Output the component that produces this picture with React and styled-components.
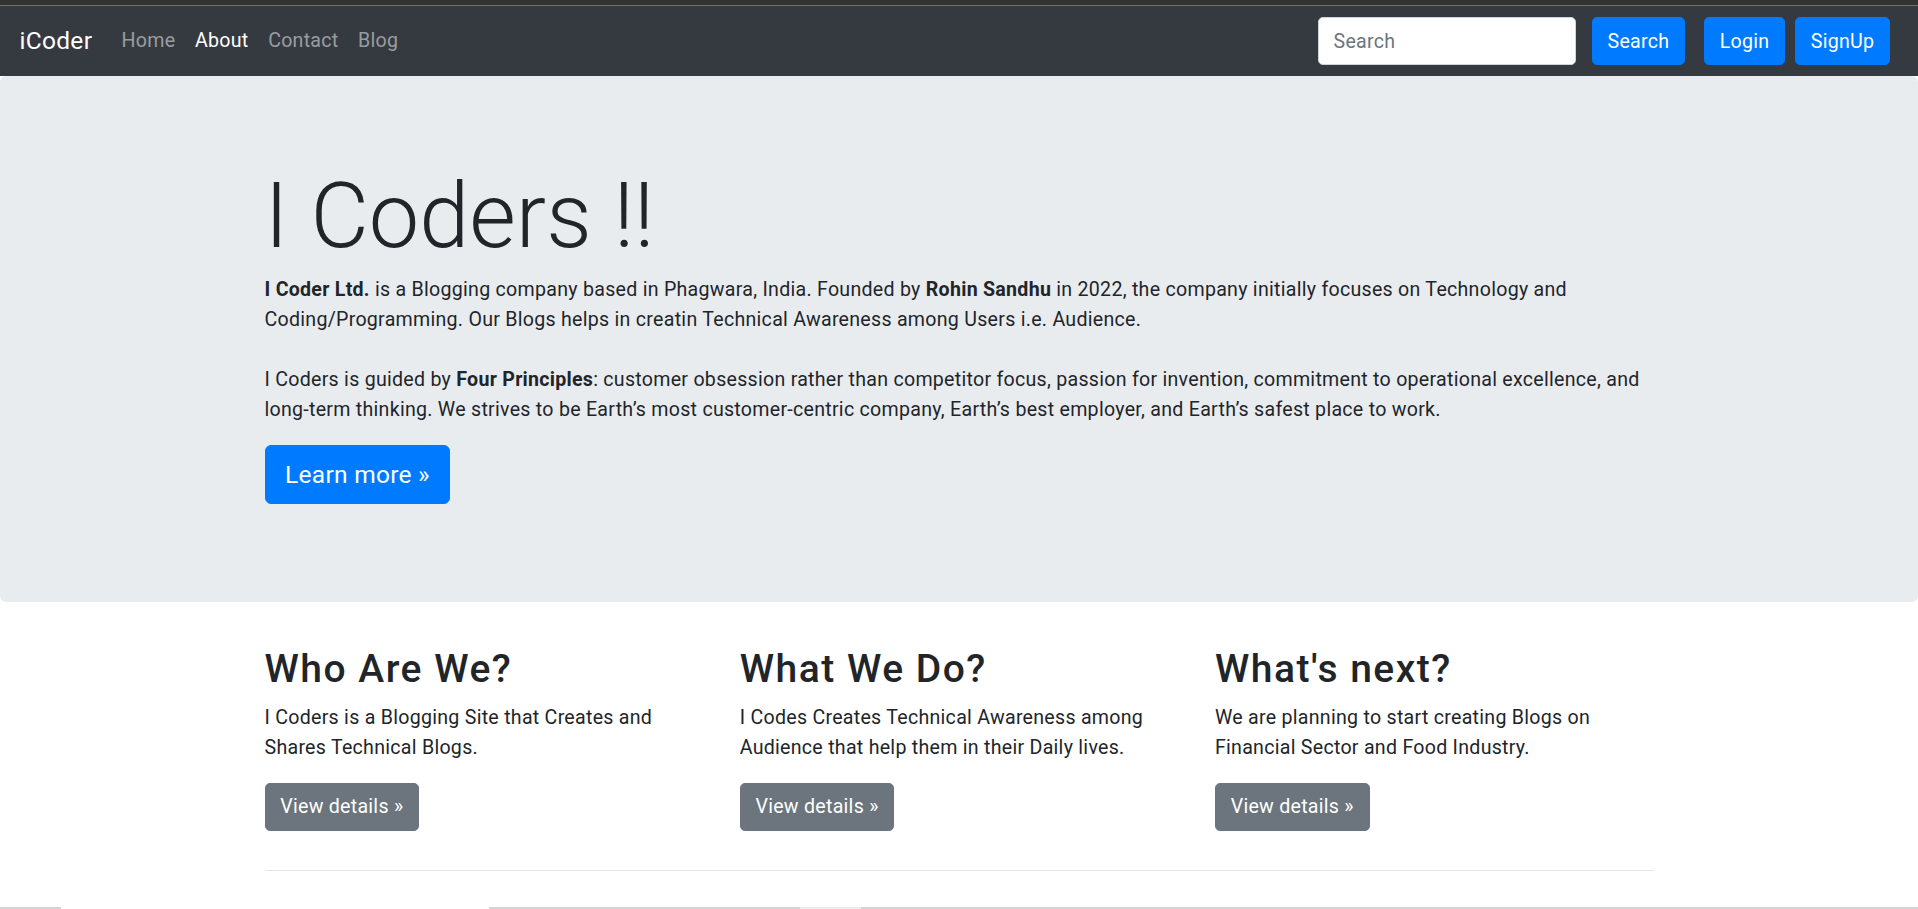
import React from 'react';
import styled, { createGlobalStyle } from 'styled-components';

const GlobalStyle = createGlobalStyle`
  html, body {
    margin: 0;
    padding: 0;
  }
  body {
    font-family: Roboto, "Segoe UI", "Liberation Sans", sans-serif;
    letter-spacing: 0.27px;
    color: #212529;
    background: #fff;
  }
  * {
    box-sizing: border-box;
  }
`;

const Page = styled.div`
  height: 100vh;
  display: flex;
  flex-direction: column;
  overflow: hidden;
`;

const TopStrip = styled.div`
  height: 6px;
  flex-shrink: 0;
  background: #333333;
  border-bottom: 1px solid #707070;
`;

const Navbar = styled.nav`
  display: flex;
  align-items: center;
  height: 70px;
  flex-shrink: 0;
  padding: 0 28px 0 19.6px;
  background: #343a40;
`;

const Brand = styled.a`
  font-size: 24.5px;
  line-height: 1.5;
  color: #fff;
  text-decoration: none;
  margin-right: 19.6px;
`;

const NavList = styled.ul`
  display: flex;
  flex: 1;
  list-style: none;
  margin: 0;
  padding: 0;
`;

const NavLink = styled.a`
  display: block;
  padding: 0 9.8px;
  font-size: 19.6px;
  line-height: 1.5;
  text-decoration: none;
  color: ${(p) => (p.$active ? '#fff' : 'rgba(255, 255, 255, 0.5)')};
`;

const Form = styled.form`
  display: flex;
  align-items: center;
  margin: 0 19px 0 0;
`;

const SearchInput = styled.input`
  width: 258px;
  height: 48px;
  padding: 7.3px 14.7px;
  font-family: inherit;
  font-size: 19.6px;
  letter-spacing: inherit;
  color: #495057;
  border: 1px solid #ced4da;
  border-radius: 4.9px;
  margin-right: 16px;
  outline: none;

  &::placeholder {
    color: #6c757d;
  }
`;

const Button = styled.button`
  display: inline-flex;
  align-items: center;
  justify-content: center;
  height: ${(p) => (p.$large ? '59px' : '48px')};
  padding: 0 ${(p) => (p.$large ? '19.6px' : '14.7px')};
  margin-left: ${(p) => p.$gap || 0}px;
  font-family: inherit;
  letter-spacing: inherit;
  font-size: ${(p) => (p.$large ? '24.5px' : '19.6px')};
  color: #fff;
  background: ${(p) => (p.$secondary ? '#6c757d' : '#007bff')};
  border: 1px solid ${(p) => (p.$secondary ? '#6c757d' : '#007bff')};
  border-radius: ${(p) => (p.$large ? '6px' : '4.9px')};
  cursor: pointer;
`;

const Main = styled.main`
  flex: 1;
  min-height: 0;
`;

const Jumbotron = styled.section`
  background: #e9ecef;
  border-radius: 6px;
  padding: 83px 0 79px;
  margin-bottom: 44px;
`;

const Container = styled.div`
  width: 1389px;
  margin: 0 auto;
`;

const Display = styled.h1`
  font-size: 90px;
  font-weight: 300;
  letter-spacing: 0;
  line-height: 116.2px;
  margin: 0;
`;

const Text = styled.p`
  font-size: 19.6px;
  line-height: 30px;
  margin: 0 0 19.6px;

  b {
    font-weight: 700;
  }
`;

const Row = styled.div`
  display: grid;
  grid-template-columns: repeat(3, 1fr);
  column-gap: 36.7px;
`;

const Heading = styled.h2`
  font-size: 39px;
  font-weight: 500;
  letter-spacing: 1.5px;
  line-height: 46.8px;
  margin: 0 0 9.8px;
`;

const Rule = styled.hr`
  margin: 19.6px 0;
  border: 0;
  border-top: 1px solid rgba(0, 0, 0, 0.1);
`;

const ScrollBar = styled.div`
  display: flex;
  height: 2px;
  flex-shrink: 0;
  background: #d3d3d3;
`;

const ScrollSeg = styled.div`
  width: ${(p) => p.$w}px;
  background: ${(p) => p.$c || 'transparent'};
`;

const cols = [
  {
    title: 'Who Are We?',
    text: 'I Coders is a Blogging Site that Creates and Shares Technical Blogs.',
  },
  {
    title: 'What We Do?',
    text: 'I Codes Creates Technical Awareness among Audience that help them in their Daily lives.',
  },
  {
    title: "What's next?",
    text: 'We are planning to start creating Blogs on Financial Sector and Food Industry.',
  },
];

export default function App() {
  return (
    <Page>
      <GlobalStyle />
      <TopStrip />
      <Navbar>
        <Brand href="#">iCoder</Brand>
        <NavList>
          <li><NavLink href="#">Home</NavLink></li>
          <li><NavLink href="#" $active>About</NavLink></li>
          <li><NavLink href="#">Contact</NavLink></li>
          <li><NavLink href="#">Blog</NavLink></li>
        </NavList>
        <Form onSubmit={(e) => e.preventDefault()}>
          <SearchInput type="search" placeholder="Search" />
          <Button type="submit">Search</Button>
        </Form>
        <Button>Login</Button>
        <Button $gap={10}>SignUp</Button>
      </Navbar>

      <Main>
        <Jumbotron>
          <Container>
            <Display>I Coders !!</Display>
            <Text>
              <b>I Coder Ltd.</b> is a Blogging company based in Phagwara, India. Founded by{' '}
              <b>Rohin Sandhu</b> in 2022, the company initially focuses on Technology and
              Coding/Programming. Our Blogs helps in creatin Technical Awareness among Users i.e.
              Audience.
              <br />
              <br />I Coders is guided by <b>Four Principles</b>: customer obsession rather than
              competitor focus, passion for invention, commitment to operational excellence, and
              long&#8209;term thinking. We strives to be Earth’s most customer-centric company, Earth’s
              best employer, and Earth’s safest place to work.
            </Text>
            <Text>
              <Button $large>Learn more »</Button>
            </Text>
          </Container>
        </Jumbotron>

        <Container>
          <Row>
            {cols.map((col) => (
              <div key={col.title}>
                <Heading>{col.title}</Heading>
                <Text>{col.text}</Text>
                <Text>
                  <Button $secondary>View details »</Button>
                </Text>
              </div>
            ))}
          </Row>
          <Rule />
        </Container>
      </Main>

      <ScrollBar>
        <ScrollSeg $w={61} />
        <ScrollSeg $w={428} $c="#fff" />
        <ScrollSeg $w={311} />
        <ScrollSeg $w={61} $c="#ececec" />
      </ScrollBar>
    </Page>
  );
}
